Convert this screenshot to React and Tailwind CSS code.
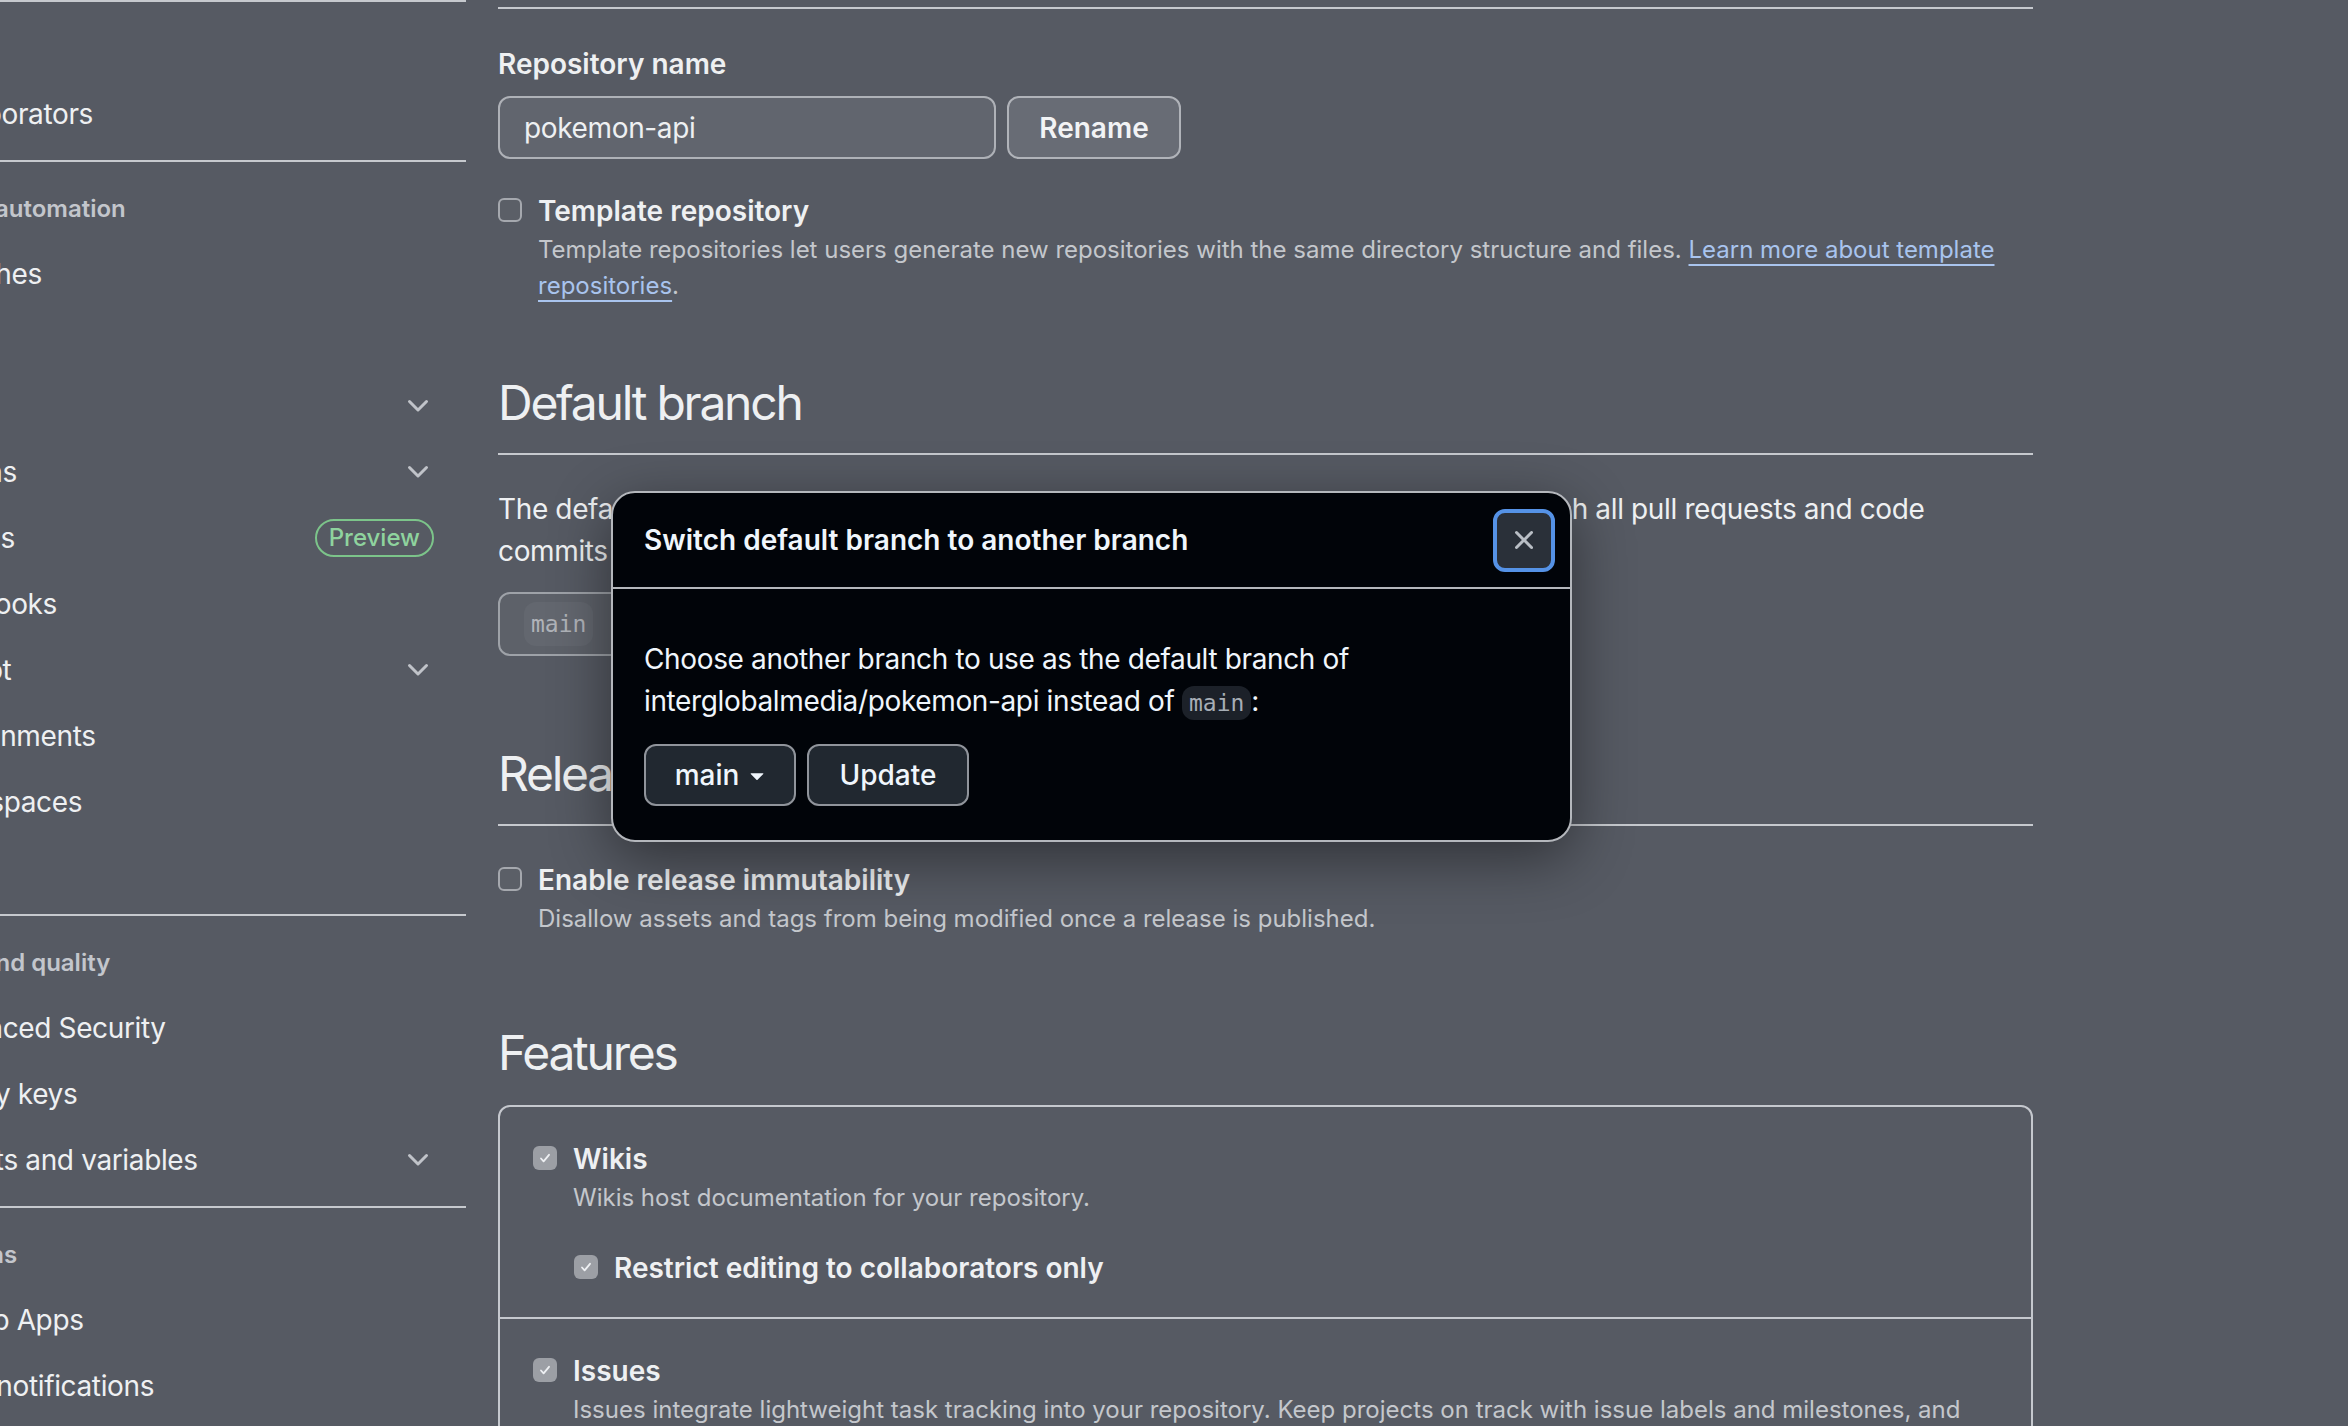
import { useState } from "react";

const groups = [
    { title: "Access", items: [{ label: "Collaborators" }] },
    {
        title: "Code and automation",
        items: [
            { label: "Branches" },
            { label: "Tags" },
            { label: "Rules", chevron: true },
            { label: "Actions", chevron: true },
            { label: "Models", badge: "Preview" },
            { label: "Webhooks" },
            { label: "Copilot", chevron: true },
            { label: "Environments" },
            { label: "Codespaces" },
            { label: "Pages" },
        ],
    },
    {
        title: "Security and quality",
        items: [
            { label: "Advanced Security" },
            { label: "Deploy keys" },
            { label: "Secrets and variables", chevron: true },
        ],
    },
    {
        title: "Integrations",
        items: [{ label: "GitHub Apps" }, { label: "Email notifications" }],
    },
];

function Chevron() {
    return (
        <svg width="32" height="32" viewBox="0 0 16 16" fill="#c0c3c9">
            <path d="M12.78 5.22a.749.749 0 0 1 0 1.06l-4.25 4.25a.749.749 0 0 1-1.06 0L3.22 6.28a.749.749 0 1 1 1.06-1.06L8 8.94l3.72-3.72a.749.749 0 0 1 1.06 0Z" />
        </svg>
    );
}

function Checkbox({ checked }) {
    if (checked) {
        return (
            <span className="w-[24px] h-[24px] rounded-[6px] bg-[#9c9fa5] flex items-center justify-center">
                <svg width="14" height="14" viewBox="0 0 14 14" fill="none" stroke="#eef0f3" strokeWidth="1.8" strokeLinecap="round" strokeLinejoin="round">
                    <path d="M3 7.5l2.6 2.8L11 3.8" />
                </svg>
            </span>
        );
    }
    return <span className="block w-[24px] h-[24px] rounded-[6px] border-2 border-[#a5a8ae] bg-[#5b5f67]" />;
}

function CheckRow({ checked, label, children, className = "" }) {
    return (
        <div className={"flex gap-[16px] " + className}>
            <div className="pt-[8px] shrink-0">
                <Checkbox checked={checked} />
            </div>
            <div>
                <div className="text-[28px] leading-[42px] font-semibold text-[#eef0f2]">{label}</div>
                {children && (
                    <p className="text-[24px] leading-[36px] text-[#c4c7cc]">{children}</p>
                )}
            </div>
        </div>
    );
}

function Sidebar() {
    return (
        <div className="w-[466px] shrink-0">
            <nav className="-ml-[138px] w-[604px]">
                {groups.map((group) => (
                    <div key={group.title} className="border-t-2 border-[#c6c9ce] pb-[13px]">
                        <div className="mt-[15px] h-[64px] flex items-center pl-[16px] text-[24px] font-semibold text-[#c3c6cc] whitespace-nowrap">
                            {group.title}
                        </div>
                        {group.items.map((item) => (
                            <div
                                key={item.label}
                                className="h-[66px] flex items-center pl-[58px] pr-[32px] text-[28px] tracking-[-0.013em] text-[#eef0f2] whitespace-nowrap"
                            >
                                <span className="flex-1">{item.label}</span>
                                {item.chevron && <Chevron />}
                                {item.badge && (
                                    <span className="h-[38px] px-[12px] rounded-full border-2 border-[#7cc48a] text-[#8fd39e] text-[24px] tracking-normal font-medium flex items-center">
                                        {item.badge}
                                    </span>
                                )}
                            </div>
                        ))}
                    </div>
                ))}
            </nav>
        </div>
    );
}

function Dialog() {
    return (
        <div className="absolute left-[611px] top-[491px] w-[961px] rounded-[24px] border-2 border-[#b4b7bc] bg-[#010409] shadow-[0_16px_60px_rgba(0,0,0,0.45)] overflow-hidden">
            <div className="h-[96px] flex items-center justify-between pl-[31px] pr-[15px] border-b-2 border-[#b4b7bc]">
                <h2 className="text-[28px] font-semibold text-[#f0f6fc]">
                    Switch default branch to another branch
                </h2>
                <button className="w-[62px] h-[63px] rounded-[12px] border-[4px] border-[#5592e6] bg-[#2a3039] flex items-center justify-center">
                    <svg width="32" height="32" viewBox="0 0 16 16" fill="#b9bec5">
                        <path d="M3.72 3.72a.75.75 0 0 1 1.06 0L8 6.94l3.22-3.22a.749.749 0 0 1 1.275.326.749.749 0 0 1-.215.734L9.06 8l3.22 3.22a.749.749 0 0 1-.326 1.275.749.749 0 0 1-.734-.215L8 9.06l-3.22 3.22a.751.751 0 0 1-1.042-.018.751.751 0 0 1-.018-1.042L6.94 8 3.72 4.78a.75.75 0 0 1 0-1.06Z" />
                    </svg>
                </button>
            </div>
            <div className="pl-[31px] pr-[31px] pt-[49px] pb-[34px]">
                <p className="text-[28px] leading-[42px] tracking-[-0.013em] text-[#f0f6fc]">
                    Choose another branch to use as the default branch of
                    <br />
                    interglobalmedia/pokemon-api instead of{" "}
                    <code className="font-['DejaVu_Sans_Mono',monospace] text-[23px] tracking-normal px-[7px] py-[4px] rounded-[12px] bg-[#1c2129] text-[#a7aeb6]">
                        main
                    </code>
                    :
                </p>
                <div className="mt-[20px] flex gap-[11px]">
                    <button className="w-[152px] h-[62px] rounded-[12px] border-2 border-[#90949b] bg-[#212830] text-[28px] font-medium text-[#f0f6fc] flex items-center justify-center gap-[4px] pl-[6px]">
                        main
                        <svg width="28" height="28" viewBox="0 0 16 16" fill="#f0f6fc">
                            <path d="m4.427 7.427 3.396 3.396a.25.25 0 0 0 .354 0l3.396-3.396A.25.25 0 0 0 11.396 7H4.604a.25.25 0 0 0-.177.427Z" />
                        </svg>
                    </button>
                    <button className="w-[162px] h-[62px] rounded-[12px] border-2 border-[#90949b] bg-[#212830] text-[28px] font-medium text-[#f0f6fc]">
                        Update
                    </button>
                </div>
            </div>
        </div>
    );
}

export default function App() {
    const [repoName] = useState("pokemon-api");

    return (
        <div className="relative w-[2348px] h-[1426px] overflow-hidden bg-[#565a63] flex font-['Inter','Noto_Sans',sans-serif]">
            <Sidebar />

            <main className="ml-[32px] w-[1535px] shrink-0 text-[#eef0f2]">
                <div className="h-[9px] border-b-2 border-[#c6c9ce]" />

                <label className="block mt-[34px] text-[28px] leading-[42px] font-semibold">
                    Repository name
                </label>
                <div className="mt-[11px] flex gap-[11px]">
                    <div className="w-[498px] h-[63px] rounded-[12px] border-2 border-[#aeb1b7] bg-[#61656e] flex items-center px-[24px] text-[28px] tracking-[-0.013em]">
                        {repoName}
                    </div>
                    <button className="w-[174px] h-[63px] rounded-[12px] border-2 border-[#b0b3b9] bg-[#686c75] text-[28px] font-semibold text-[#f2f3f5]">
                        Rename
                    </button>
                </div>

                <CheckRow className="mt-[31px]" label="Template repository">
                    Template repositories let users generate new repositories with the same directory structure and files.{" "}
                    <a className="text-[#a9c4ee] underline decoration-2 underline-offset-[6px]">
                        Learn more about template repositories
                    </a>
                    .
                </CheckRow>

                <h2 className="mt-[63px] pb-[14px] border-b-2 border-[#c6c9ce] text-[48px] leading-[72px] tracking-[-0.047em]">
                    Default branch
                </h2>
                <p className="mt-[33px] text-[28px] leading-[42px] tracking-[-0.013em]">
                    The default branch is considered the “base” branch in your repository, against which all pull requests and code commits are automatically made, unless you specify a different branch.
                </p>
                <div className="mt-[20px] w-[560px] h-[64px] rounded-[12px] border-2 border-[#9ea2a8] bg-[#5d6169] flex items-center px-[24px]">
                    <code className="font-['DejaVu_Sans_Mono',monospace] text-[23px] px-[7px] py-[5px] rounded-[12px] bg-[#63676f] text-[#b0b3b9]">
                        main
                    </code>
                </div>

                <h2 className="mt-[82px] pb-[14px] border-b-2 border-[#c6c9ce] text-[48px] leading-[72px] tracking-[-0.047em]">
                    Releases
                </h2>
                <CheckRow className="mt-[33px]" label="Enable release immutability">
                    Disallow assets and tags from being modified once a release is published.
                </CheckRow>

                <h2 className="mt-[80px] text-[48px] leading-[72px] tracking-[-0.047em]">Features</h2>
                <div className="mt-[16px] rounded-[12px] border-2 border-[#c5c8ce]">
                    <div className="pl-[33px] pt-[31px] pb-[28px]">
                        <CheckRow checked label="Wikis">
                            Wikis host documentation for your repository.
                        </CheckRow>
                        <CheckRow checked className="mt-[31px] ml-[41px]" label="Restrict editing to collaborators only" />
                    </div>
                    <div className="border-t-2 border-[#c5c8ce] pl-[33px] pt-[31px] pb-[32px]">
                        <CheckRow checked label="Issues">
                            Issues integrate lightweight task tracking into your repository. Keep projects on track with issue labels and milestones, and reference them in commits and pull requests.
                        </CheckRow>
                    </div>
                </div>
            </main>

            <Dialog />
        </div>
    );
}
